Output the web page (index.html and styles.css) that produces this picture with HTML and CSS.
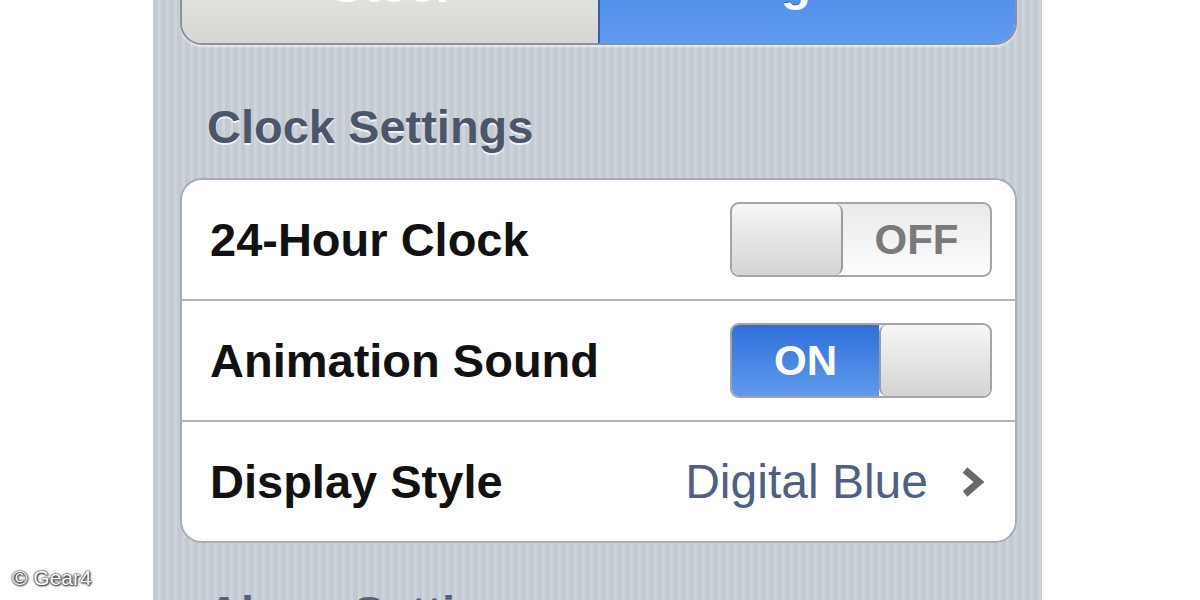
FILE: index.html
```html
<!DOCTYPE html>
<html>
<head>
<meta charset="utf-8" />
<title>Clock Settings</title>
<link rel="stylesheet" href="styles.css">
</head>
<body>
<div class="page">
	<div class="side"></div>
	<div class="screen">
		<div class="segmented">
			<span class="seg">Steel</span>
			<span class="seg on">Digital</span>
		</div>
		<h2 class="group-title">Clock Settings</h2>
		<div class="group">
			<div class="row">
				<span class="label">24-Hour Clock</span>
				<span class="switch off"><span class="knob"></span><span class="state">OFF</span></span>
			</div>
			<div class="row">
				<span class="label">Animation Sound</span>
				<span class="switch on"><span class="state">ON</span><span class="knob"></span></span>
			</div>
			<div class="row">
				<span class="label">Display Style</span>
				<span class="value">Digital Blue</span>
				<svg class="chevron" width="26" height="32" viewBox="0 0 26 32"><polyline points="5,4 19,16 5,28" fill="none" stroke="#68696c" stroke-width="7" stroke-linejoin="miter" /></svg>
			</div>
		</div>
		<h2 class="group-title next">Alarm Settings</h2>
	</div>
	<div class="side"></div>
</div>
<div class="credit">&copy; Gear4</div>
</body>
</html>
```

FILE: styles.css
```css
*{margin:0;padding:0;box-sizing:border-box;}
body{width:1200px;height:600px;overflow:hidden;background:#fff;font-family:"Liberation Sans",Arial,sans-serif;position:relative;}
.page{display:flex;height:600px;}
.side{width:153px;flex:none;background:#fff;}
.side:last-child{width:158px;}
.screen{width:889px;flex:none;height:600px;overflow:hidden;padding:0 25px 0 27px;
	background:repeating-linear-gradient(90deg,#c3cad2 0 5px,#cdd4db 5px 8px);}

/* segmented control */
.segmented{display:flex;height:120px;margin-top:-75px;border:2px solid #8d9096;border-radius:0 0 22px 22px;overflow:hidden;box-shadow:0 2px 2px rgba(255,255,255,.6);}
.seg{flex:1;display:flex;align-items:center;justify-content:center;padding-bottom:4px;font-size:50px;font-weight:bold;color:#5a5a5a;text-shadow:0 2px 0 #fff;
	background:linear-gradient(#f4f4f2,#d5d5d2);}
.seg.on{color:#fff;text-shadow:0 -1px 0 rgba(0,0,0,.3);border-left:2px solid #2f5fb0;
	background:linear-gradient(#3f7fe2,#5f9bf0);}

.group-title{font-size:47px;line-height:56px;font-weight:bold;color:#4c566b;text-shadow:0 2px 0 rgba(255,255,255,.8);padding-left:27px;margin:54px 0 23px;}
.group-title.next{margin-top:42px;color:#56607a;}

/* grouped table */
.group{background:#fff;border:2px solid #a9adb3;border-radius:22px;overflow:hidden;}
.row{display:flex;align-items:center;height:121px;padding:0 23px 0 28px;border-top:2px solid #b3b5b8;}
.row:first-child{border-top:none;height:119px;}
.label{flex:1;font-size:47px;font-weight:bold;color:#111;}
.value{font-size:48px;color:#4f5f86;margin-right:32px;}
.chevron{margin-right:6px;}

/* switches */
.switch{display:flex;width:262px;height:75px;border:2px solid #a3a5a8;border-radius:9px;overflow:hidden;
	background:linear-gradient(#e9e9e9,#fdfdfd);}
.knob{width:111px;flex:none;background:linear-gradient(#f6f6f6,#d4d4d4);}
.switch.off .knob{border-right:2px solid #9c9c9c;border-radius:8px;}
.switch.on .knob{border-left:2px solid #9c9c9c;border-radius:8px;}
.state{flex:1;display:flex;align-items:center;justify-content:center;font-size:42px;font-weight:bold;}
.switch.off .state{color:#7a7a7a;}
.switch.on .state{color:#fff;background:linear-gradient(#2f6fd9,#5e9bee);}

.credit{position:absolute;left:12px;top:566px;font-size:21px;color:#fff;
	text-shadow:0 0 2px #333,0 0 2px #333,1px 1px 2px #222;}
```
